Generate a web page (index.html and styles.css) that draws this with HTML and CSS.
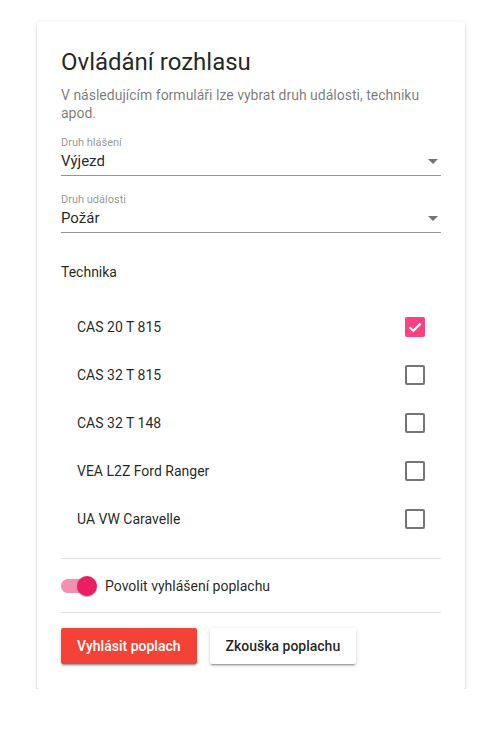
FILE: index.html
```html
<!DOCTYPE html>
<html lang="cs">
<head>
<meta charset="utf-8">
<title>Ovládání rozhlasu</title>
<link rel="stylesheet" href="styles.css">
</head>
<body>
<div class="card">
  <h1 class="title">Ovládání rozhlasu</h1>
  <p class="subtitle">V následujícím formuláři lze vybrat druh události, techniku apod.</p>

  <div class="field field-first">
    <div class="field-label">Druh hlášení</div>
    <div class="field-value">
      <span>Výjezd</span>
      <svg class="arrow" width="10" height="5" viewBox="0 0 10 5"><path d="M0 0 L10 0 L5 5 Z" fill="#757575"/></svg>
    </div>
  </div>

  <div class="field">
    <div class="field-label">Druh události</div>
    <div class="field-value">
      <span>Požár</span>
      <svg class="arrow" width="10" height="5" viewBox="0 0 10 5"><path d="M0 0 L10 0 L5 5 Z" fill="#757575"/></svg>
    </div>
  </div>

  <div class="section-title">Technika</div>

  <ul class="list">
    <li class="item"><span>CAS 20 T 815</span>
      <span class="checkbox checked"><svg width="20" height="20" viewBox="0 0 20 20"><path d="M4.5 10.2 L8.3 13.8 L15.5 6.6" fill="none" stroke="#fff" stroke-width="2.2"/></svg></span></li>
    <li class="item"><span>CAS 32 T 815</span><span class="checkbox"></span></li>
    <li class="item"><span>CAS 32 T 148</span><span class="checkbox"></span></li>
    <li class="item"><span>VEA L2Z Ford Ranger</span><span class="checkbox"></span></li>
    <li class="item"><span>UA VW Caravelle</span><span class="checkbox"></span></li>
  </ul>

  <div class="switch-row">
    <span class="switch"><span class="track"></span><span class="thumb"></span></span>
    <span class="switch-label">Povolit vyhlášení poplachu</span>
  </div>

  <div class="actions">
    <button class="btn btn-primary">Vyhlásit poplach</button>
    <button class="btn btn-default">Zkouška poplachu</button>
  </div>
</div>
</body>
</html>
```

FILE: styles.css
```css
* { box-sizing: border-box; }
body {
  margin: 0;
  background: #fff;
  font-family: Roboto, "Liberation Sans", sans-serif;
  color: rgba(0,0,0,.87);
}
.card {
  width: 428px;
  margin: 22px 0 0 37px;
  padding: 24px 24px 25px;
  background: #fff;
  border-radius: 2px;
  box-shadow: 0 3px 1px -2px rgba(0,0,0,.2), 0 2px 2px 0 rgba(0,0,0,.14), 0 1px 5px 0 rgba(0,0,0,.12);
}
.title {
  margin: 0;
  font-size: 24px;
  line-height: 32px;
  font-weight: 400;
  color: rgba(0,0,0,.87);
}
.subtitle {
  margin: 8px 0 0;
  font-size: 14px;
  line-height: 18px;
  color: rgba(0,0,0,.54);
}
.field {
  margin-top: 17px;
  border-bottom: 1px solid rgba(0,0,0,.42);
}
.field-first { margin-top: 14px; }
.field-label {
  font-size: 11px;
  line-height: 13px;
  color: rgba(0,0,0,.45);
}
.field-value {
  display: flex;
  align-items: center;
  justify-content: space-between;
  font-size: 15px;
  line-height: 24px;
  height: 26px;
  padding-bottom: 2px;
}
.arrow { margin-right: 3px; }
.section-title {
  margin-top: 29px;
  font-size: 14px;
  line-height: 20px;
}
.list {
  list-style: none;
  margin: 21px 0 0;
  padding: 0 0 15px;
  border-bottom: 1px solid rgba(0,0,0,.12);
}
.item {
  display: flex;
  align-items: center;
  justify-content: space-between;
  height: 48px;
  padding: 0 16px;
  font-size: 14px;
}
.checkbox {
  width: 20px;
  height: 20px;
  border: 2px solid #757575;
  border-radius: 2px;
  display: flex;
  align-items: center;
  justify-content: center;
}
.checkbox.checked {
  border: none;
  background: #ff4081;
}
.switch-row {
  display: flex;
  align-items: center;
  gap: 8px;
  height: 54px;
  border-bottom: 1px solid rgba(0,0,0,.12);
  font-size: 14px;
}
.switch {
  position: relative;
  width: 36px;
  height: 20px;
  display: block;
}
.track {
  position: absolute;
  left: 0;
  top: 3px;
  width: 34px;
  height: 14px;
  border-radius: 7px;
  background: #f48fb1;
}
.thumb {
  position: absolute;
  right: 0;
  top: 0;
  width: 20px;
  height: 20px;
  border-radius: 50%;
  background: #e91e63;
  box-shadow: 0 2px 1px -1px rgba(0,0,0,.2), 0 1px 1px 0 rgba(0,0,0,.14), 0 1px 3px 0 rgba(0,0,0,.12);
}
.actions {
  display: flex;
  gap: 13px;
  margin-top: 15px;
}
.btn {
  height: 36px;
  padding: 0 16px;
  border: none;
  border-radius: 2px;
  font-family: Roboto, "Liberation Sans", sans-serif;
  font-size: 14px;
  font-weight: 500;
  box-shadow: 0 3px 1px -2px rgba(0,0,0,.2), 0 2px 2px 0 rgba(0,0,0,.14), 0 1px 5px 0 rgba(0,0,0,.12);
}
.btn-primary { background: #f44336; color: #fff; }
.btn-default { background: #fff; color: rgba(0,0,0,.87); }
```
